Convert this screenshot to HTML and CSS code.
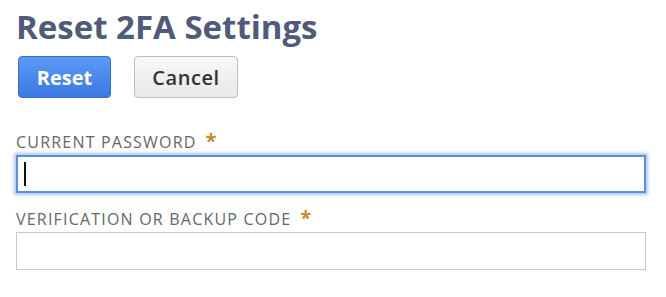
FILE: index.html
```html
<!DOCTYPE html>
<html lang="en">
<head>
<meta charset="utf-8">
<title>Reset 2FA Settings</title>
<link rel="stylesheet" href="styles.css">
</head>
<body>
<main class="page">
  <h1 class="title">Reset 2FA Settings</h1>
  <div class="actions">
    <button class="btn btn-primary" type="button">Reset</button>
    <button class="btn btn-secondary" type="button">Cancel</button>
  </div>
  <form class="form">
    <div class="field">
      <label class="label" for="pw">CURRENT PASSWORD<span class="req">*</span></label>
      <div class="input input-focus" id="pw"><span class="caret"></span></div>
    </div>
    <div class="field">
      <label class="label" for="code">VERIFICATION OR BACKUP CODE<span class="req">*</span></label>
      <div class="input" id="code"></div>
    </div>
  </form>
</main>
</body>
</html>
```

FILE: styles.css
```css
html, body {
  margin: 0;
  padding: 0;
  background: #ffffff;
}
body {
  font-family: "Open Sans", "Liberation Sans", sans-serif;
}
.page {
  padding: 0 20px 0 16px;
}
.title {
  margin: 0;
  padding-top: 5px;
  font-size: 33px;
  line-height: 44px;
  font-weight: 700;
  color: #4f5b78;
}
.actions {
  display: flex;
  gap: 23px;
  margin-top: 7px;
  padding-left: 2px;
}
.btn {
  box-sizing: border-box;
  height: 42px;
  border-radius: 4px;
  font-family: "Open Sans", "Liberation Sans", sans-serif;
  font-size: 20px;
  padding: 0;
  cursor: pointer;
}
.btn-primary {
  width: 93px;
  color: #ffffff;
  font-weight: 700;
  background: linear-gradient(#5b9af5, #3b78e3);
  border: 1px solid #3a6ccb;
}
.btn-secondary {
  width: 104px;
  color: #333333;
  font-weight: 600;
  letter-spacing: 0.6px;
  background: linear-gradient(#f8f8f8, #e8e8e8);
  border: 1px solid #bdbdbd;
}
.form {
  margin-top: 33px;
}
.field {
  margin-bottom: 15px;
}
.label {
  display: block;
  font-size: 16px;
  line-height: 22px;
  letter-spacing: 1.2px;
  color: #666666;
}
.req {
  color: #c8892b;
  font-weight: 700;
  font-size: 20px;
  line-height: 0;
  margin-left: 9px;
}
.input {
  box-sizing: border-box;
  height: 38px;
  margin-top: 2px;
  border: 1px solid #c8c8c8;
  background: #ffffff;
  display: flex;
  align-items: center;
  padding-left: 6px;
}
.input-focus {
  border: 2px solid #5d8fd8;
  box-shadow: 0 0 3px 2px rgba(120, 165, 235, 0.6);
}
.caret {
  width: 2px;
  height: 24px;
  background: #111111;
}
```
